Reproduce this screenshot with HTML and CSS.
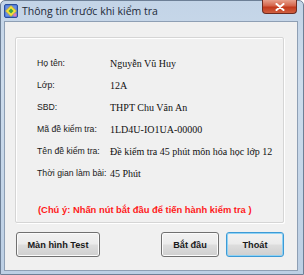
FILE: index.html
```html
<!DOCTYPE html>
<html lang="vi">
<head>
<meta charset="utf-8">
<title>Thông tin trước khi kiểm tra</title>
<link rel="stylesheet" href="styles.css">
</head>
<body>
<div class="window">
  <div class="titlebar">
    <div class="title-left">
      <svg class="app-icon" width="14" height="14" viewBox="0 0 14 14">
        <rect x="0.5" y="0.5" width="13" height="13" rx="1.5" fill="#3f6fd0" stroke="#2a4f9e"/>
        <rect x="1.5" y="1.5" width="11" height="11" fill="#6a8ee0"/>
        <polygon points="7,1.5 12.5,7 7,12.5 1.5,7" fill="#f4e03a" stroke="#b8a020" stroke-width="0.6"/>
        <polygon points="7,4.5 9.5,7 7,9.5 4.5,7" fill="#3aa64a"/>
        <rect x="9.5" y="9.5" width="3" height="3" fill="#e07ab0"/>
      </svg>
      <span class="title-text">Thông tin trước khi kiểm tra</span>
    </div>
    <div class="close-btn">
      <svg width="10" height="8" viewBox="0 0 10 8">
        <path d="M1.5 1 L8.5 7 M8.5 1 L1.5 7" stroke="#ffffff" stroke-width="2" stroke-linecap="round"/>
      </svg>
    </div>
  </div>
  <div class="client">
    <div class="group">
      <div class="row"><span class="label">Họ tên:</span><span class="value">Nguyễn Vũ Huy</span></div>
      <div class="row"><span class="label">Lớp:</span><span class="value">12A</span></div>
      <div class="row"><span class="label">SBD:</span><span class="value">THPT Chu Văn An</span></div>
      <div class="row"><span class="label">Mã đề kiểm tra:</span><span class="value">1LD4U-IO1UA-00000</span></div>
      <div class="row"><span class="label">Tên đề kiểm tra:</span><span class="value">Đề kiểm tra 45 phút môn hóa học lớp 12</span></div>
      <div class="row"><span class="label">Thời gian làm bài:</span><span class="value">45 Phút</span></div>
      <div class="note">(Chú ý: Nhấn nút bắt đầu để tiến hành kiểm tra )</div>
    </div>
    <div class="buttons">
      <div class="btn btn-test">Màn hình Test</div>
      <div class="btn-group">
        <div class="btn">Bắt đầu</div>
        <div class="btn btn-focus">Thoát</div>
      </div>
    </div>
  </div>
</div>
</body>
</html>
```
FILE: styles.css
```css
html, body {
  margin: 0;
  padding: 0;
}
body {
  width: 304px;
  height: 275px;
  overflow: hidden;
  background: #ffffff;
}
.window {
  width: 304px;
  height: 275px;
  box-sizing: border-box;
  display: flex;
  flex-direction: column;
  background: linear-gradient(180deg, #c3d4e7 0%, #cddcec 30%, #bccfe4 100%);
  border: 1px solid #6d7f96;
  border-radius: 5px 5px 0 0;
}
.titlebar {
  height: 20px;
  display: flex;
  justify-content: space-between;
  align-items: flex-start;
}
.title-left {
  display: flex;
  align-items: center;
  gap: 4px;
  padding: 3px 0 0 3px;
}
.app-icon {
  display: block;
}
.title-text {
  font-family: "Open Sans", "DejaVu Sans", sans-serif;
  font-size: 10.5px;
  color: #1e2a38;
  line-height: 14px;
}
.close-btn {
  width: 35px;
  height: 14px;
  margin-right: 6px;
  margin-top: -1px;
  box-sizing: border-box;
  border: 1px solid #6d2b20;
  border-top: none;
  border-radius: 0 0 4px 4px;
  background: linear-gradient(180deg, #e8a08c 0%, #d4644a 45%, #c2391c 55%, #d06040 100%);
  display: flex;
  align-items: center;
  justify-content: center;
}
.close-btn svg {
  display: block;
}
.client {
  flex: 1;
  margin: 0 5px 3px 3px;
  background: #f0f0f0;
  border: 1px solid #8e9fb4;
  display: flex;
  flex-direction: column;
  padding: 15px 13px 0 10px;
}
.group {
  height: 186px;
  box-sizing: border-box;
  border: 1px solid #d5d5d5;
  box-shadow: inset 1px 1px 0 #ffffff, 1px 1px 0 #ffffff;
  border-radius: 2px;
  padding: 14px 0 0 21px;
  display: flex;
  flex-direction: column;
}
.row {
  display: flex;
  align-items: center;
  height: 22px;
}
.label {
  width: 73px;
  flex: none;
  white-space: nowrap;
  font-family: "Liberation Sans", sans-serif;
  font-size: 8.7px;
  color: #1a1a1a;
}
.value {
  white-space: nowrap;
  font-family: "Liberation Serif", serif;
  font-size: 10px;
  color: #111111;
}
.note {
  margin-top: 20px;
  white-space: nowrap;
  font-family: "Liberation Sans", sans-serif;
  font-weight: bold;
  font-size: 9.4px;
  color: #ff1a1a;
  padding-left: 1px;
}
.buttons {
  margin-top: 9px;
  display: flex;
  justify-content: space-between;
  padding-left: 1px;
}
.btn-group {
  display: flex;
  gap: 7px;
}
.btn {
  width: 58px;
  height: 25px;
  box-sizing: border-box;
  border: 1px solid #707070;
  border-radius: 3px;
  background: linear-gradient(180deg, #f2f2f2 0%, #ebebeb 48%, #dddddd 52%, #cfcfcf 100%);
  box-shadow: inset 0 0 0 1px #fbfbfb;
  font-family: "Liberation Sans", sans-serif;
  font-weight: bold;
  font-size: 9.2px;
  color: #1a1a1a;
  display: flex;
  align-items: center;
  justify-content: center;
}
.btn-test {
  width: 84px;
}
.btn-focus {
  border-color: #3c9ad6;
  box-shadow: inset 0 0 0 1px #8fd2f4;
}
```
